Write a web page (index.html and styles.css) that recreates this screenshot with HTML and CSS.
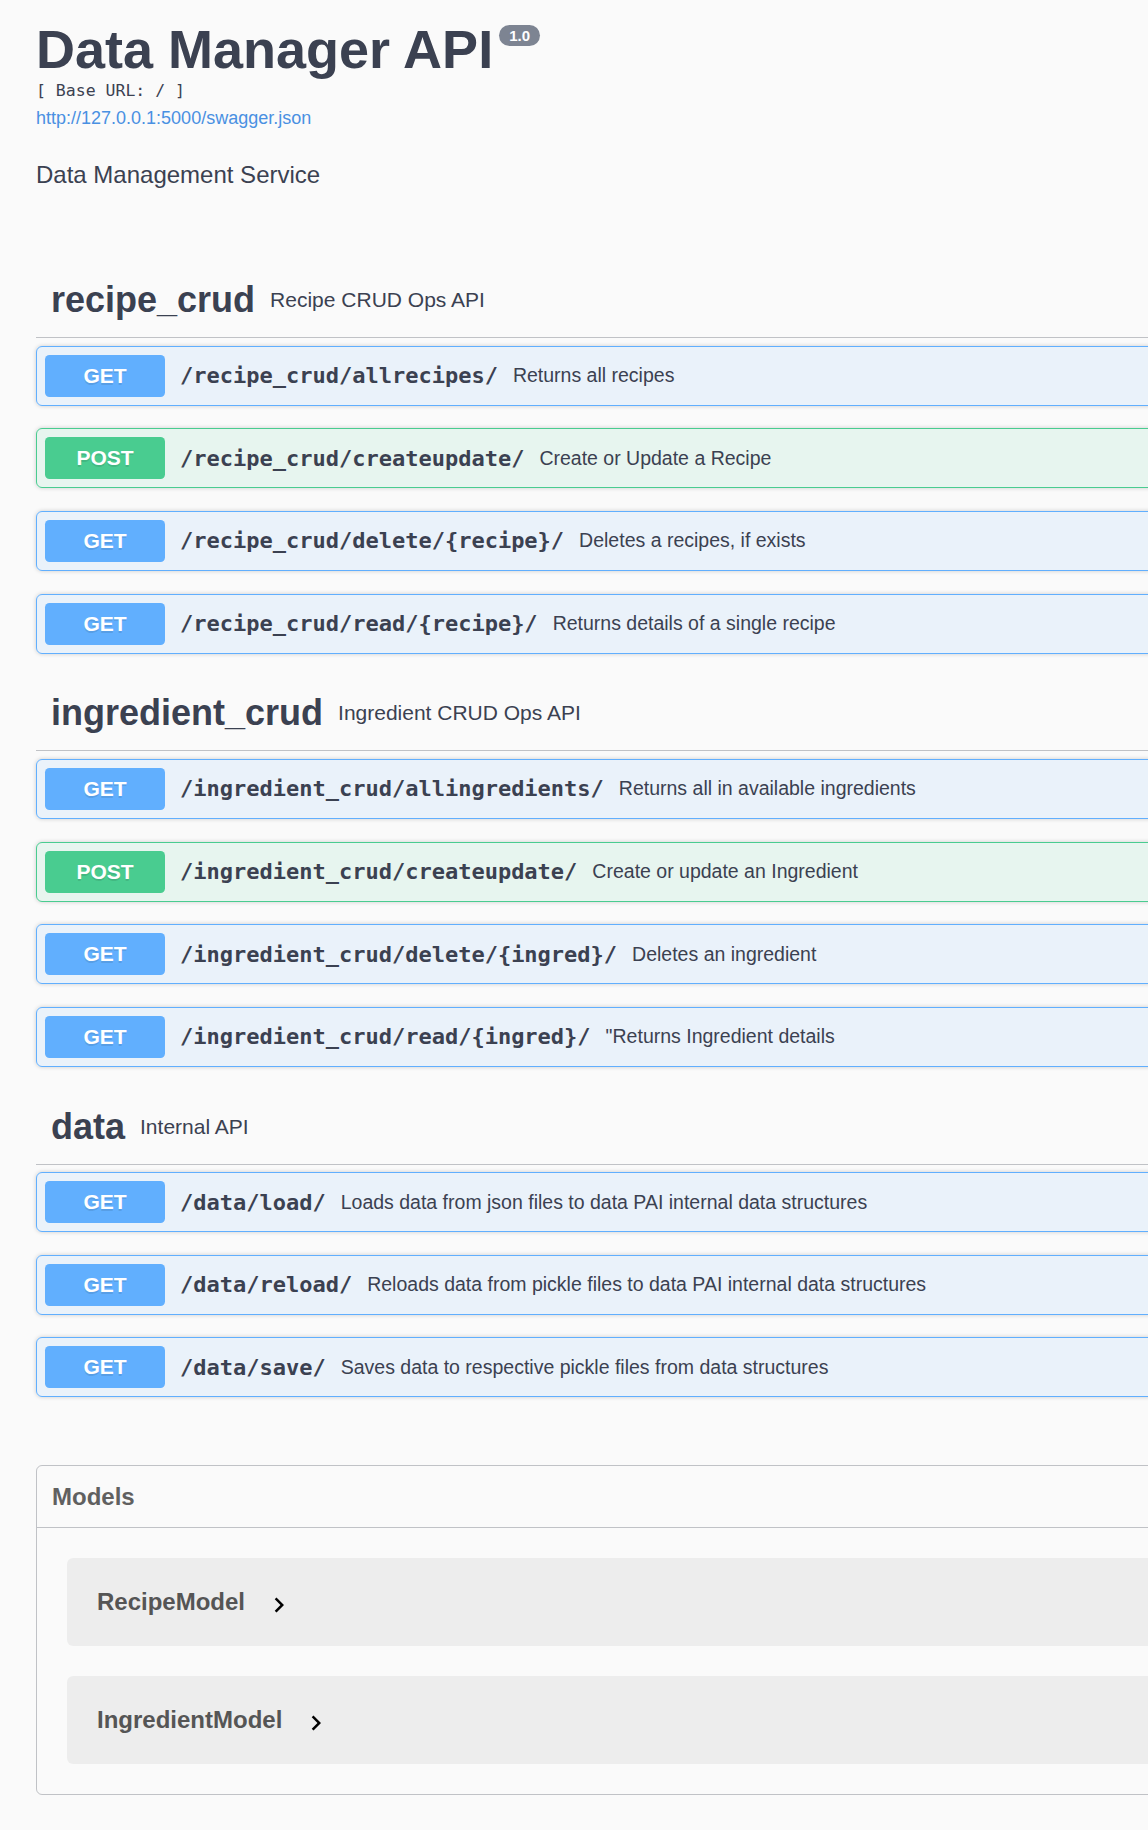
FILE: index.html
```html
<!DOCTYPE html>
<html lang="en">
<head>
<meta charset="utf-8">
<title>Data Manager API</title>
<link rel="stylesheet" href="styles.css">
</head>
<body>
<div class="page">
  <div class="info">
    <div class="title-row">
      <h2 class="title">Data Manager API</h2>
      <span class="version">1.0</span>
    </div>
    <pre class="base-url">[ Base URL: / ]</pre>
    <a class="spec-url" href="#">http://127.0.0.1:5000/swagger.json</a>
    <p class="description">Data Management Service</p>
  </div>

  <section class="tag-section">
    <h4 class="tag"><span>recipe_crud</span><small>Recipe CRUD Ops API</small></h4>
    <div class="opblock get"><span class="method">GET</span><span class="path">/recipe_crud/allrecipes/</span><span class="op-desc">Returns all recipes</span></div>
    <div class="opblock post"><span class="method">POST</span><span class="path">/recipe_crud/createupdate/</span><span class="op-desc">Create or Update a Recipe</span></div>
    <div class="opblock get"><span class="method">GET</span><span class="path">/recipe_crud/delete/{recipe}/</span><span class="op-desc">Deletes a recipes, if exists</span></div>
    <div class="opblock get"><span class="method">GET</span><span class="path">/recipe_crud/read/{recipe}/</span><span class="op-desc">Returns details of a single recipe</span></div>
  </section>

  <section class="tag-section">
    <h4 class="tag"><span>ingredient_crud</span><small>Ingredient CRUD Ops API</small></h4>
    <div class="opblock get"><span class="method">GET</span><span class="path">/ingredient_crud/allingredients/</span><span class="op-desc">Returns all in available ingredients</span></div>
    <div class="opblock post"><span class="method">POST</span><span class="path">/ingredient_crud/createupdate/</span><span class="op-desc">Create or update an Ingredient</span></div>
    <div class="opblock get"><span class="method">GET</span><span class="path">/ingredient_crud/delete/{ingred}/</span><span class="op-desc">Deletes an ingredient</span></div>
    <div class="opblock get"><span class="method">GET</span><span class="path">/ingredient_crud/read/{ingred}/</span><span class="op-desc">"Returns Ingredient details</span></div>
  </section>

  <section class="tag-section">
    <h4 class="tag"><span>data</span><small>Internal API</small></h4>
    <div class="opblock get"><span class="method">GET</span><span class="path">/data/load/</span><span class="op-desc">Loads data from json files to data PAI internal data structures</span></div>
    <div class="opblock get"><span class="method">GET</span><span class="path">/data/reload/</span><span class="op-desc">Reloads data from pickle files to data PAI internal data structures</span></div>
    <div class="opblock get"><span class="method">GET</span><span class="path">/data/save/</span><span class="op-desc">Saves data to respective pickle files from data structures</span></div>
  </section>

  <section class="models">
    <h4 class="models-title">Models</h4>
    <div class="model-container">
      <span class="model-title">RecipeModel</span>
      <svg class="chevron" width="30" height="30" viewBox="0 0 24 24"><path d="M10 6L8.59 7.41 13.17 12l-4.58 4.59L10 18l6-6z"/></svg>
    </div>
    <div class="model-container">
      <span class="model-title">IngredientModel</span>
      <svg class="chevron" width="30" height="30" viewBox="0 0 24 24"><path d="M10 6L8.59 7.41 13.17 12l-4.58 4.59L10 18l6-6z"/></svg>
    </div>
  </section>
</div>
</body>
</html>
```

FILE: styles.css
```css
html, body {
  margin: 0;
  padding: 0;
}

body {
  background: #fafafa;
  overflow: hidden;
  font-family: "Liberation Sans", Arial, sans-serif;
  color: #3b4151;
}

.page {
  width: 1560px;
  padding: 0 0 0 36px;
  box-sizing: border-box;
}

/* ---------- info ---------- */
.info {
  padding-top: 19px;
}

.title-row {
  display: flex;
  align-items: flex-start;
}

.title {
  margin: 0;
  font-size: 54px;
  line-height: 60px;
  font-weight: 700;
  color: #3b4151;
}

.version {
  margin: 6px 0 0 6px;
  padding: 2px 10px;
  border-radius: 11px;
  background: #7d8492;
  color: #fff;
  font-size: 15px;
  line-height: 17px;
  font-weight: 700;
}

.base-url {
  margin: 0;
  padding-top: 1px;
  font-family: "DejaVu Sans Mono", "Liberation Mono", monospace;
  font-size: 16.5px;
  line-height: 22px;
  color: #3b4151;
}

.spec-url {
  display: block;
  margin-top: 5px;
  font-size: 18px;
  line-height: 22px;
  color: #4990e2;
  text-decoration: none;
}

.description {
  margin: 32px 0 74px;
  font-size: 24px;
  line-height: 28px;
}

/* ---------- tags ---------- */
.tag {
  display: flex;
  align-items: center;
  margin: 0 0 7.7px;
  padding: 22px 30px 22px 15px;
  line-height: 30px;
  font-size: 36px;
  font-weight: 700;
  border-bottom: 1px solid rgba(59, 65, 81, 0.3);
}

.tag small {
  flex: 1;
  padding: 0 15px;
  font-size: 21px;
  font-weight: 400;
}

/* ---------- operations ---------- */
.opblock {
  display: flex;
  align-items: center;
  padding: 8px;
  margin: 0 0 22.65px;
  border: 1px solid #000;
  border-radius: 6px;
  box-shadow: 0 0 4.5px rgba(0, 0, 0, 0.19);
}

.opblock.get {
  border-color: #61affe;
  background: rgba(97, 175, 254, 0.1);
}

.opblock.post {
  border-color: #49cc90;
  background: rgba(73, 204, 144, 0.1);
}

.method {
  box-sizing: border-box;
  min-width: 120px;
  height: 42px;
  padding: 0 22px;
  line-height: 42px;
  text-align: center;
  font-size: 21px;
  font-weight: 700;
  color: #fff;
  border-radius: 4.5px;
  text-shadow: 0 1.5px 0 rgba(0, 0, 0, 0.1);
}

.get .method {
  background: #61affe;
}

.post .method {
  background: #49cc90;
}

.path {
  padding: 0 15px;
  font-family: "DejaVu Sans Mono", "Liberation Mono", monospace;
  font-weight: 700;
  font-size: 22px;
  color: #3b4151;
}

.op-desc {
  font-size: 19.5px;
  color: #3b4151;
}

/* ---------- models ---------- */
.models {
  margin-top: 67.8px;
  padding-bottom: 30px;
  border: 1px solid rgba(59, 65, 81, 0.3);
  border-radius: 6px;
}

.models-title {
  margin: 0;
  padding: 16px 30px 15px 15px;
  line-height: 30px;
  font-size: 24px;
  font-weight: 700;
  color: #606060;
  border-bottom: 1px solid rgba(59, 65, 81, 0.3);
}

.model-container {
  display: flex;
  align-items: center;
  height: 88px;
  margin: 30px 30px 0;
  padding-left: 30px;
  border-radius: 6px;
  background: rgba(0, 0, 0, 0.05);
}

.model-title {
  font-size: 24px;
  font-weight: 700;
  color: #555;
}

.chevron {
  margin: 6px 0 0 19px;
  fill: #000;
}
```
